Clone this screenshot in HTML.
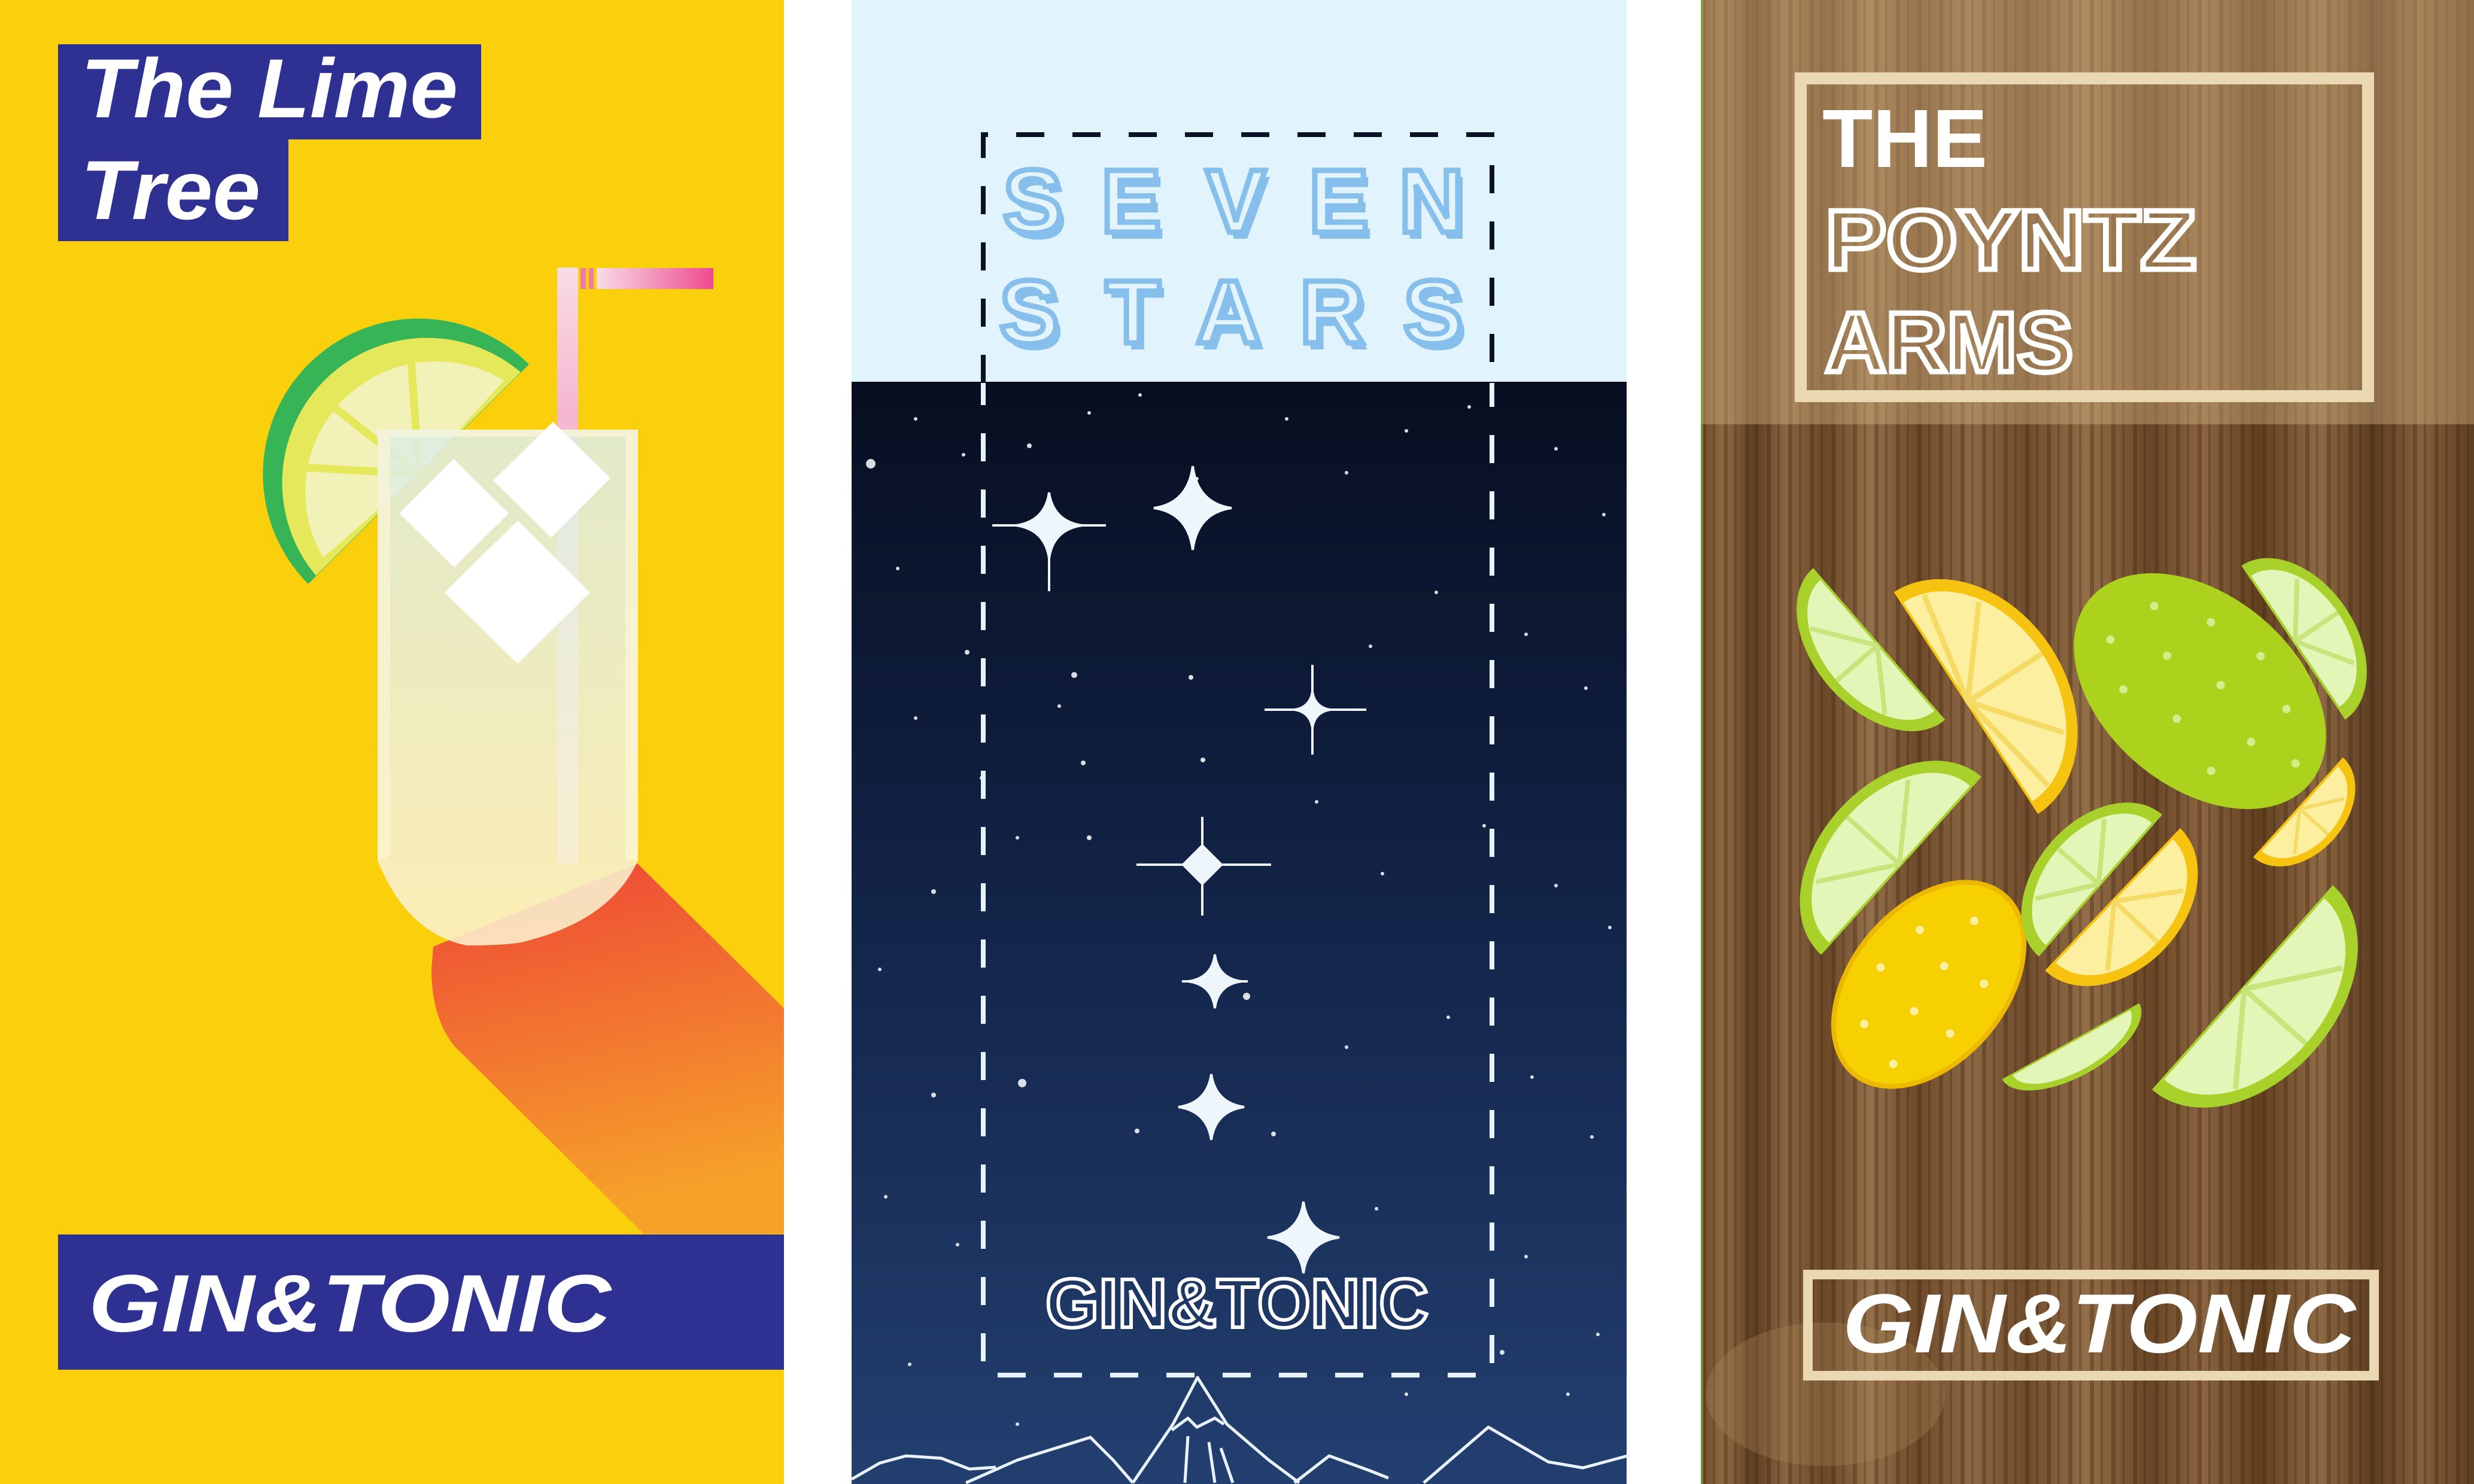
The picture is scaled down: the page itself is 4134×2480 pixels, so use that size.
<!DOCTYPE html>
<html><head><meta charset="utf-8"><style>
html,body{margin:0;padding:0;background:#fff;width:4134px;height:2480px;overflow:hidden}
svg{display:block}
text{font-family:"Liberation Sans",sans-serif;font-weight:bold}
</style></head><body>
<svg width="4134" height="2480" viewBox="0 0 4134 2480" xmlns="http://www.w3.org/2000/svg">
<defs>
<linearGradient id="sh" x1="0" y1="0" x2="0.2" y2="1"><stop offset="0" stop-color="#EE4536"/><stop offset="1" stop-color="#F6A22A"/></linearGradient>
<linearGradient id="glass" x1="0" y1="0" x2="0" y2="1"><stop offset="0" stop-color="#DDEDE3"/><stop offset="1" stop-color="#FCF1CC"/></linearGradient>
<linearGradient id="straw" x1="0" y1="0" x2="1" y2="0"><stop offset="0" stop-color="#F8DCE6"/><stop offset="1" stop-color="#EE4A8E"/></linearGradient>
<linearGradient id="strawv" x1="0" y1="0" x2="0" y2="1"><stop offset="0" stop-color="#F9DCE4"/><stop offset="0.25" stop-color="#F5B6CE"/><stop offset="0.4" stop-color="#F9DCE4"/><stop offset="1" stop-color="#F9DCE4"/></linearGradient>
<linearGradient id="sky" x1="0" y1="0" x2="0" y2="1"><stop offset="0" stop-color="#070E20"/><stop offset="0.5" stop-color="#13254A"/><stop offset="1" stop-color="#233F70"/></linearGradient>
<linearGradient id="wood" x1="0" y1="0" x2="1" y2="0">
<stop offset="0" stop-color="#6E4C2C"/><stop offset="0.03" stop-color="#8F6A42"/><stop offset="0.07" stop-color="#5E3E22"/><stop offset="0.11" stop-color="#8A6540"/><stop offset="0.16" stop-color="#6A4828"/><stop offset="0.22" stop-color="#94704A"/><stop offset="0.28" stop-color="#6E4A2A"/><stop offset="0.35" stop-color="#8C6844"/><stop offset="0.42" stop-color="#704C2C"/><stop offset="0.5" stop-color="#936E48"/><stop offset="0.58" stop-color="#6A4626"/><stop offset="0.65" stop-color="#8A6440"/><stop offset="0.72" stop-color="#62401F"/><stop offset="0.8" stop-color="#8E6A44"/><stop offset="0.87" stop-color="#5C3C20"/><stop offset="0.93" stop-color="#86603C"/><stop offset="1" stop-color="#5E3E22"/></linearGradient>
<pattern id="grain" width="36" height="2480" patternUnits="userSpaceOnUse"><rect x="0" width="7" height="2480" fill="#3e250f" opacity="0.35"/><rect x="18" width="4" height="2480" fill="#2e1a08" opacity="0.25"/></pattern>
</defs>

<rect width="4134" height="2480" fill="#fff"/>

<!-- PANEL 1 -->
<rect x="0" y="0" width="1310" height="2480" fill="#FAD00C"/>
<path d="M1065 1443 L1310 1685 L1310 2062 L1076 2062 L759 1748 Q721 1700 721 1620 L724 1582 Z" fill="url(#sh)"/>
<g>
<path d="M515 976 A260 260 0 0 1 884 609 Z" fill="#37B556"/>
<path d="M528 962 A242 242 0 0 1 870 622 Z" fill="#E6E85C"/>
<path d="M540 932 A218 218 0 0 1 842 636 L700 792 Z" fill="#F2F2B8"/>
<g stroke="#E6E85C" stroke-width="13"><line x1="700" y1="792" x2="487" y2="780"/><line x1="700" y1="792" x2="540" y2="666"/><line x1="700" y1="792" x2="686" y2="588"/></g>
</g>
<rect x="931" y="447" width="35" height="996" fill="url(#strawv)"/>
<rect x="970" y="448" width="9" height="35" fill="#EF7BA8"/>
<rect x="984" y="448" width="8" height="35" fill="#EF7BA8"/>
<rect x="997" y="448" width="195" height="35" fill="url(#straw)"/>
<path d="M631 718 L1066 718 L1066 1438 Q1020 1540 870 1575 Q840 1580 780 1580 Q680 1560 631 1438 Z" fill="url(#glass)" opacity="0.88"/>
<path d="M631 718 L1066 718 L1066 1438 L1045 1438 L1045 730 L652 730 L652 1430 L631 1438 Z" fill="#FFF6D8" opacity="0.6"/>
<g fill="#fff">
<polygon points="667,858 758,767 850,858 759,948"/>
<polygon points="824,803 924,705 1020,799 921,898"/>
<polygon points="743,990 865,870 986,990 865,1109"/>
</g>
<rect x="97" y="74" width="707" height="159" fill="#2E3192"/>
<rect x="97" y="232" width="385" height="171" fill="#2E3192"/>
<text x="135" y="196" font-size="140" font-style="italic" fill="#fff" textLength="630" lengthAdjust="spacingAndGlyphs">The Lime</text>
<text x="135" y="366" font-size="140" font-style="italic" fill="#fff" textLength="300" lengthAdjust="spacingAndGlyphs">Tree</text>
<rect x="97" y="2063" width="1213" height="226" fill="#2E3192"/>
<text x="148" y="2225" font-size="136" font-style="italic" fill="#fff" textLength="873" lengthAdjust="spacingAndGlyphs">GIN&amp;TONIC</text>

<!-- PANEL 2 -->
<rect x="1423" y="0" width="1295" height="638" fill="#E1F3FD"/>
<rect x="1423" y="638" width="1295" height="1842" fill="url(#sky)"/>
<g fill="#fff" opacity="0.85">
<circle cx="1455" cy="775" r="8"/><circle cx="1530" cy="700" r="3"/><circle cx="1610" cy="760" r="3"/><circle cx="1720" cy="745" r="4"/><circle cx="1820" cy="690" r="3"/><circle cx="1905" cy="660" r="3"/><circle cx="2000" cy="800" r="3"/><circle cx="2150" cy="700" r="3"/><circle cx="2250" cy="790" r="3"/><circle cx="2350" cy="720" r="3"/><circle cx="2455" cy="680" r="3"/><circle cx="2600" cy="750" r="3"/><circle cx="2680" cy="860" r="3"/>
<circle cx="1500" cy="950" r="3"/><circle cx="1616" cy="1090" r="4"/><circle cx="1795" cy="1128" r="5"/><circle cx="1990" cy="1132" r="4"/><circle cx="2010" cy="1270" r="4"/><circle cx="1810" cy="1275" r="4"/><circle cx="1770" cy="1180" r="3"/><circle cx="2290" cy="1080" r="3"/><circle cx="2400" cy="990" r="3"/><circle cx="2550" cy="1060" r="3"/><circle cx="2650" cy="1150" r="3"/><circle cx="1530" cy="1200" r="3"/><circle cx="1640" cy="1300" r="3"/>
<circle cx="1560" cy="1490" r="4"/><circle cx="1700" cy="1400" r="3"/><circle cx="1820" cy="1400" r="4"/><circle cx="2200" cy="1340" r="3"/><circle cx="2310" cy="1460" r="3"/><circle cx="2480" cy="1380" r="3"/><circle cx="2600" cy="1480" r="3"/><circle cx="2690" cy="1550" r="3"/><circle cx="1470" cy="1620" r="3"/>
<circle cx="2083" cy="1665" r="6"/><circle cx="1708" cy="1810" r="7"/><circle cx="1560" cy="1830" r="4"/><circle cx="1900" cy="1890" r="4"/><circle cx="2128" cy="1895" r="4"/><circle cx="2250" cy="1750" r="3"/><circle cx="2420" cy="1700" r="3"/><circle cx="2560" cy="1800" r="3"/><circle cx="2660" cy="1900" r="3"/><circle cx="1480" cy="2000" r="3"/><circle cx="1600" cy="2080" r="3"/><circle cx="2300" cy="2020" r="3"/><circle cx="2550" cy="2100" r="3"/><circle cx="2670" cy="2230" r="3"/><circle cx="1520" cy="2280" r="3"/><circle cx="2510" cy="2260" r="4"/><circle cx="2620" cy="2330" r="3"/><circle cx="1700" cy="2380" r="3"/><circle cx="2350" cy="2330" r="3"/>
</g>
<g fill="none" stroke-width="8" stroke-dasharray="47 47">
<path d="M1643 640 L1643 225 L2493 225 L2493 640" stroke="#0A1226"/>
<path d="M1643 640 L1643 2298 L2493 2298 L2493 640" stroke="#E6F2FC" stroke-dashoffset="10"/>
</g>
<g font-size="150" text-anchor="middle" fill="#86BEEC">
<g transform="translate(8,7)">
<text x="1726" y="392">S</text><text x="1890" y="392">E</text><text x="2065" y="392">V</text><text x="2237" y="392">E</text><text x="2392" y="392">N</text>
<text x="1720" y="577">S</text><text x="1893" y="577">T</text><text x="2053" y="577">A</text><text x="2226" y="577">R</text><text x="2395" y="577">S</text>
</g>
<g fill="#E4F4FD" stroke="#86BEEC" stroke-width="9">
<text x="1726" y="388">S</text><text x="1890" y="388">E</text><text x="2065" y="388">V</text><text x="2237" y="388">E</text><text x="2392" y="388">N</text>
<text x="1720" y="573">S</text><text x="1893" y="573">T</text><text x="2053" y="573">A</text><text x="2226" y="573">R</text><text x="2395" y="573">S</text>
</g>
</g>
<g fill="#EEF6FC" stroke="#EEF6FC" stroke-width="4">
<g transform="translate(1753,878)"><path d="M0,-55 Q7,-7 55,0 Q7,7 0,55 Q-7,7 -55,0 Q-7,-7 0,-55Z"/><line x1="0" y1="0" x2="0" y2="110"/><line x1="-95" y1="0" x2="95" y2="0"/></g>
<g transform="translate(1993,849)"><path d="M0,-70 Q8,-8 65,0 Q8,8 0,70 Q-8,8 -65,0 Q-8,-8 0,-70Z"/></g>
<g transform="translate(2193,1186)"><path d="M0,-30 Q4,-4 30,0 Q4,4 0,30 Q-4,4 -30,0 Q-4,-4 0,-30Z"/><line x1="0" y1="-75" x2="0" y2="75"/><line x1="-80" y1="0" x2="90" y2="0"/></g>
<g transform="translate(2009,1445)"><path d="M0,-32 L32,0 L0,32 L-32,0Z"/><line x1="0" y1="-80" x2="0" y2="85"/><line x1="-110" y1="0" x2="115" y2="0"/></g>
<g transform="translate(2030,1640)"><path d="M0,-45 Q5,-5 45,0 Q5,5 0,45 Q-5,5 -45,0 Q-5,-5 0,-45Z"/><line x1="-55" y1="0" x2="55" y2="0"/></g>
<g transform="translate(2024,1850)"><path d="M0,-55 Q7,-7 55,0 Q7,7 0,55 Q-7,7 -55,0 Q-7,-7 0,-55Z"/></g>
<g transform="translate(2178,2068)"><path d="M0,-60 Q7,-7 60,0 Q7,7 0,60 Q-7,7 -60,0 Q-7,-7 0,-60Z"/></g>
</g>
<text x="2067" y="2218" font-size="116" font-weight="normal" text-anchor="middle" fill="none" stroke="#fff" stroke-width="6" textLength="640" lengthAdjust="spacingAndGlyphs">GIN&amp;TONIC</text>
<g fill="none" stroke="#EAF3FB" stroke-width="5" stroke-linejoin="round">
<path d="M1423 2472 L1470 2445 L1514 2433 L1573 2437 L1620 2455 L1664 2452"/>
<path d="M1614 2478 L1700 2440 L1822 2402 L1860 2440 L1893 2478"/>
<path d="M1893 2478 L1960 2380 L2001 2302 L2050 2380 L2120 2440 L2171 2478"/>
<path d="M1958 2390 L1985 2370 L2000 2385 L2030 2370 L2045 2380"/>
<path d="M2163 2478 L2221 2433 L2287 2457 L2320 2470"/>
<path d="M2379 2478 L2487 2385 L2587 2443 L2645 2453 L2723 2432"/>
<path d="M1980 2478 L1985 2400 M2030 2478 L2020 2410 M2060 2478 L2040 2420"/>
</g>

<!-- PANEL 3 -->
<rect x="2842" y="0" width="1292" height="2480" fill="url(#wood)"/>
<rect x="2842" y="0" width="1292" height="2480" fill="url(#grain)"/>
<ellipse cx="3050" cy="2330" rx="200" ry="120" fill="#B08A5E" opacity="0.3"/>
<rect x="2842" y="0" width="1292" height="709" fill="#D9B888" opacity="0.4"/>
<rect x="2842" y="0" width="4" height="2480" fill="#7CC242" opacity="0.6"/>
<rect x="3009" y="131" width="948" height="531" fill="none" stroke="#EAD8B2" stroke-width="20"/>
<text x="3045" y="279" font-size="138" fill="#fff" textLength="276" lengthAdjust="spacingAndGlyphs">THE</text>
<text x="3050" y="450" font-size="142" fill="none" stroke="#fff" stroke-width="9" textLength="620" lengthAdjust="spacingAndGlyphs">POYNTZ</text>
<text x="3050" y="621" font-size="142" fill="none" stroke="#fff" stroke-width="9" textLength="414" lengthAdjust="spacingAndGlyphs">ARMS</text>
<rect x="3021" y="2130" width="946" height="169" fill="none" stroke="#EAD8B2" stroke-width="16"/>
<text x="3079" y="2260" font-size="140" font-style="italic" fill="#fff" textLength="857" lengthAdjust="spacingAndGlyphs">GIN&amp;TONIC</text>

<g stroke-linejoin="round">
<g transform="translate(3140,1076) rotate(229)"><path d="M-168 0 A168 110 0 0 1 168 0Z" fill="#A9D12C"/><path d="M-145 -4 A145 90 0 0 1 145 -4Z" fill="#E4F5B8"/><g stroke="#C7E57A" stroke-width="8"><line x1="0" y1="-4" x2="-95" y2="-70"/><line x1="0" y1="-4" x2="0" y2="-94"/><line x1="0" y1="-4" x2="95" y2="-70"/></g></g>
<g transform="translate(3285,1175) rotate(57)"><path d="M-221 0 A221 170 0 0 1 221 0Z" fill="#F6C310"/><path d="M-198 -4 A198 148 0 0 1 198 -4Z" fill="#FCEFA0"/><g stroke="#F5DB66" stroke-width="9"><line x1="0" y1="-4" x2="-130" y2="-110"/><line x1="0" y1="-4" x2="0" y2="-152"/><line x1="0" y1="-4" x2="130" y2="-110"/><line x1="0" y1="-4" x2="-190" y2="-40"/><line x1="0" y1="-4" x2="190" y2="-40"/></g></g>
<g transform="translate(3676,1155) rotate(40)"><ellipse rx="240" ry="160" fill="#ACD21E"/><g fill="#D5EC88"><circle cx="-150" cy="-60" r="7"/><circle cx="-60" cy="-100" r="7"/><circle cx="40" cy="-110" r="7"/><circle cx="130" cy="-70" r="7"/><circle cx="-170" cy="30" r="7"/><circle cx="-80" cy="-10" r="7"/><circle cx="20" cy="-30" r="7"/><circle cx="120" cy="10" r="7"/><circle cx="200" cy="-10" r="7"/><circle cx="-100" cy="80" r="7"/><circle cx="0" cy="60" r="7"/><circle cx="100" cy="90" r="7"/></g></g>
<g transform="translate(3832,1074) rotate(56)"><path d="M-155 0 A155 105 0 0 1 155 0Z" fill="#A9D12C"/><path d="M-132 -4 A132 86 0 0 1 132 -4Z" fill="#E4F5B8"/><g stroke="#C7E57A" stroke-width="8"><line x1="0" y1="-4" x2="-85" y2="-65"/><line x1="0" y1="-4" x2="0" y2="-90"/><line x1="0" y1="-4" x2="85" y2="-65"/></g></g>
<g transform="translate(3177,1447) rotate(-48)"><path d="M-200 0 A200 140 0 0 1 200 0Z" fill="#A9D12C"/><path d="M-176 -4 A176 118 0 0 1 176 -4Z" fill="#E4F5B8"/><g stroke="#C7E57A" stroke-width="8"><line x1="0" y1="-4" x2="-115" y2="-88"/><line x1="0" y1="-4" x2="0" y2="-122"/><line x1="0" y1="-4" x2="115" y2="-88"/></g></g>
<g transform="translate(3223,1645) rotate(-50)"><ellipse rx="195" ry="128" fill="#F6D000" stroke="#EDB800" stroke-width="8"/><g fill="#FCEFA0"><circle cx="-120" cy="-40" r="7"/><circle cx="-30" cy="-80" r="7"/><circle cx="60" cy="-70" r="7"/><circle cx="-140" cy="40" r="7"/><circle cx="-50" cy="10" r="7"/><circle cx="40" cy="0" r="7"/><circle cx="130" cy="-10" r="7"/><circle cx="-40" cy="80" r="7"/><circle cx="60" cy="70" r="7"/></g></g>
<g transform="translate(3510,1480) rotate(-49)"><path d="M-157 0 A157 110 0 0 1 157 0Z" fill="#A9D12C"/><path d="M-135 -4 A135 90 0 0 1 135 -4Z" fill="#E4F5B8"/><g stroke="#C7E57A" stroke-width="8"><line x1="0" y1="-4" x2="-88" y2="-68"/><line x1="0" y1="-4" x2="0" y2="-94"/><line x1="0" y1="-4" x2="88" y2="-68"/></g></g>
<g transform="translate(3530,1503) rotate(133.5)"><path d="M-164 0 A164 120 0 0 1 164 0Z" fill="#F6C310"/><path d="M-142 -4 A142 100 0 0 1 142 -4Z" fill="#FCEFA0"/><g stroke="#F5DB66" stroke-width="8"><line x1="0" y1="-4" x2="-92" y2="-76"/><line x1="0" y1="-4" x2="0" y2="-104"/><line x1="0" y1="-4" x2="92" y2="-76"/></g></g>
<g transform="translate(3840,1349) rotate(132)"><path d="M-112 0 A112 80 0 0 1 112 0Z" fill="#F6C310"/><path d="M-95 -4 A95 64 0 0 1 95 -4Z" fill="#FCEFA0"/><g stroke="#F5DB66" stroke-width="6"><line x1="0" y1="-4" x2="-62" y2="-48"/><line x1="0" y1="-4" x2="0" y2="-68"/><line x1="0" y1="-4" x2="62" y2="-48"/></g></g>
<g transform="translate(3460,1740) rotate(151)"><path d="M-131 0 A131 60 0 0 1 131 0Z" fill="#A9D12C"/><path d="M-112 -3 A112 48 0 0 1 112 -3Z" fill="#E4F5B8"/></g>
<g transform="translate(3747,1650) rotate(131.5)"><path d="M-228 0 A228 160 0 0 1 228 0Z" fill="#A9D12C"/><path d="M-202 -4 A202 138 0 0 1 202 -4Z" fill="#E4F5B8"/><g stroke="#C7E57A" stroke-width="9"><line x1="0" y1="-4" x2="-135" y2="-104"/><line x1="0" y1="-4" x2="0" y2="-142"/><line x1="0" y1="-4" x2="135" y2="-104"/></g></g>
</g>
</svg>
</body></html>
